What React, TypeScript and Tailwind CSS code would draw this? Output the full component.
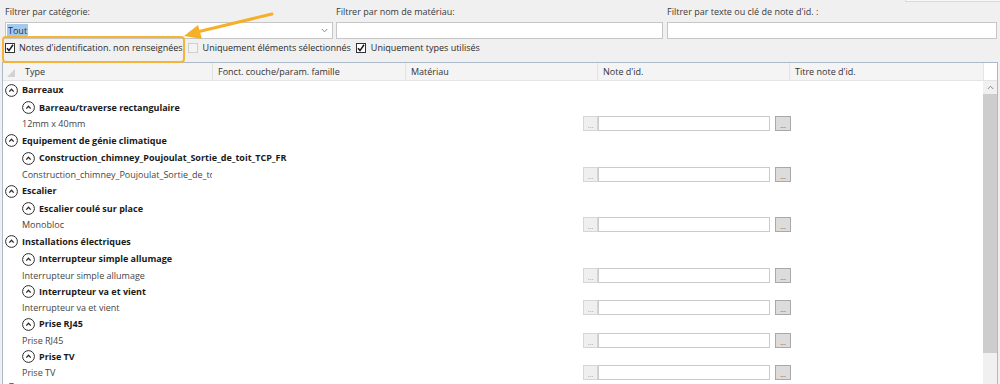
import React from 'react';

type TypeNode = { name: string; items: string[] };
type Group = { name: string; types: TypeNode[] };

const groups: Group[] = [
  {
    name: 'Barreaux',
    types: [{ name: 'Barreau/traverse rectangulaire', items: ['12mm x 40mm'] }],
  },
  {
    name: 'Equipement de génie climatique',
    types: [
      {
        name: 'Construction_chimney_Poujoulat_Sortie_de_toit_TCP_FR',
        items: ['Construction_chimney_Poujoulat_Sortie_de_toit_TCP_FR'],
      },
    ],
  },
  {
    name: 'Escalier',
    types: [{ name: 'Escalier coulé sur place', items: ['Monobloc'] }],
  },
  {
    name: 'Installations électriques',
    types: [
      { name: 'Interrupteur simple allumage', items: ['Interrupteur simple allumage'] },
      { name: 'Interrupteur va et vient', items: ['Interrupteur va et vient'] },
      { name: 'Prise RJ45', items: ['Prise RJ45'] },
      { name: 'Prise TV', items: ['Prise TV'] },
    ],
  },
  // next group, only its icon peeks in at the bottom edge
  { name: '', types: [] },
];

const CollapseIcon = () => (
  <svg width="13" height="13" viewBox="0 0 13 13" className="shrink-0">
    <circle cx="6.5" cy="6.5" r="5.9" fill="#fff" stroke="#2b2b2b" strokeWidth="1" />
    <path d="M4.3 7.6 L6.5 5.3 L8.7 7.6" fill="none" stroke="#2b2b2b" strokeWidth="1.3" />
  </svg>
);

const CheckBox = ({ checked, disabled }: { checked?: boolean; disabled?: boolean }) => (
  <span
    className={`flex h-[10px] w-[10px] items-center justify-center border ${
      disabled ? 'border-[#cfcfcf] bg-[#f3f3f3]' : 'border-[#333] bg-white'
    }`}
  >
    {checked && (
      <svg width="8" height="8" viewBox="0 0 8 8">
        <path d="M1 4.2 L3 6.6 L7 0.8" fill="none" stroke="#1a1a1a" strokeWidth="1.5" />
      </svg>
    )}
  </span>
);

const Dots = ({ dark }: { dark?: boolean }) => (
  <span className={`mt-[5px] text-[7px] leading-none ${dark ? 'text-[#555]' : 'text-[#999]'}`}>...</span>
);

const NoteInputs = () => (
  <div className="flex items-center">
    <span className="flex h-[15px] w-[15px] justify-center border border-[#d6d6d6] bg-[#efefef]">
      <Dots />
    </span>
    <span className="h-[15px] w-[172px] border border-[#cacaca] bg-white" />
    <span className="ml-[5px] flex h-[15px] w-[16px] justify-center border border-[#a9a9a9] bg-[#dcdcdc]">
      <Dots dark />
    </span>
  </div>
);

const headerCols = [
  { label: 'Type', w: 'w-[192px]' },
  { label: 'Fonct. couche/param. famille', w: 'w-[193px]' },
  { label: 'Matériau', w: 'w-[192px]' },
  { label: "Note d'id.", w: 'w-[192px]' },
  { label: "Titre note d'id.", w: 'w-[194px]' },
];

export default function App() {
  return (
    <div className="relative h-[384px] w-[1000px] overflow-hidden bg-[#f0f0f0] font-['Open_Sans','Segoe_UI',sans-serif] text-[9px] text-[#262626]">
      {/* top-right strip */}
      <div className="flex h-[2px] justify-end">
        <div className="w-[95px] border-b border-l border-[#d9d9d9] bg-[#f8f8f8]" />
      </div>

      {/* filters */}
      <div className="mt-[4px] flex pl-[5px]">
        <div className="w-[328px]">
          <div className="h-[12px] leading-[12px] text-[#3a3a3a]">Filtrer par catégorie:</div>
          <div className="mt-[4px] flex h-[17px] items-center justify-between border border-[#c6c6c6] bg-white pl-[1px] pr-[4px]">
            <span className="bg-[#a3c9ef] px-[1px] leading-[13px] text-[#1c3553]">Tout</span>
            <svg width="7" height="5" viewBox="0 0 7 5">
              <path d="M0.8 1 L3.5 3.8 L6.2 1" fill="none" stroke="#8a8a8a" strokeWidth="1" />
            </svg>
          </div>
        </div>
        <div className="ml-[3px] w-[327px]">
          <div className="h-[12px] leading-[12px] text-[#3a3a3a]">Filtrer par nom de matériau:</div>
          <div className="mt-[4px] h-[17px] border border-[#c6c6c6] bg-white" />
        </div>
        <div className="ml-[4px] w-[330px]">
          <div className="h-[12px] leading-[12px] text-[#3a3a3a]">Filtrer par texte ou clé de note d'id. :</div>
          <div className="mt-[4px] h-[17px] border border-[#c6c6c6] bg-white" />
        </div>
      </div>

      {/* checkboxes */}
      <div className="flex h-[17px] items-center pl-[5px] pt-[1px] text-[#2a2a2a]">
        <CheckBox checked />
        <span className="ml-[4px]">Notes d'identification. non renseignées</span>
        <span className="ml-[5px]">
          <CheckBox disabled />
        </span>
        <span className="ml-[5px]">Uniquement éléments sélectionnés</span>
        <span className="ml-[5px]">
          <CheckBox checked />
        </span>
        <span className="ml-[5px]">Uniquement types utilisés</span>
      </div>

      {/* callout */}
      <div className="absolute left-[2px] top-[36px] h-[27px] w-[183px] rounded-[4px] border-2 border-[#f4b43a]" />
      <svg className="absolute left-0 top-0" width="300" height="60" viewBox="0 0 300 60">
        <line x1="272" y1="14" x2="197" y2="32" stroke="#f5b028" strokeWidth="3" strokeLinecap="round" />
        <polygon points="184,36 198,25 202,39" fill="#f5b028" />
      </svg>

      {/* table */}
      <div className="ml-[2px] mt-[6px] w-[996px] border border-[#abb9c9] bg-white">
        <div className="flex h-[18px] border-b border-[#e4e4e4]">
          <div className="flex w-[980px] bg-[#f4f4f4]">
            <div className="relative w-[17px]">
              <svg className="absolute left-[4px] top-[6px]" width="8" height="8" viewBox="0 0 8 8">
                <polygon points="8,0 8,8 0,8" fill="#d2d2d2" />
              </svg>
            </div>
            {headerCols.map((c, i) => (
              <div
                key={c.label}
                className={`${c.w} flex items-center pl-[5px] text-[#333] ${i > 0 ? 'border-l border-[#e2e2e2]' : ''}`}
              >
                {c.label}
              </div>
            ))}
          </div>
          <div className="w-[14px] border-l border-[#e6e6e6] bg-white" />
        </div>

        <div className="flex h-[320px]">
          <div className="w-[980px]">
            {groups.map((g, gi) => (
              <React.Fragment key={gi}>
                <div className="flex h-[18px] items-center gap-[4px] pl-[2px] font-bold text-[#1a1a1a]">
                  <CollapseIcon />
                  {g.name && <span>{g.name}</span>}
                </div>
                {g.types.map((t) => (
                  <React.Fragment key={t.name}>
                    <div className="flex h-[17px] items-center gap-[4px] pl-[19px] font-bold text-[#1a1a1a]">
                      <CollapseIcon />
                      <span className="whitespace-nowrap">{t.name}</span>
                    </div>
                    {t.items.map((it) => (
                      <div key={it} className="flex h-[15.5px] items-center">
                        <div className="w-[209px] overflow-hidden whitespace-nowrap pl-[19px] text-[#444]">{it}</div>
                        <div className="ml-[371px]">
                          <NoteInputs />
                        </div>
                      </div>
                    ))}
                  </React.Fragment>
                ))}
              </React.Fragment>
            ))}
          </div>

          {/* scrollbar */}
          <div className="flex w-[14px] flex-col bg-[#f0f0f0]">
            <div className="flex h-[13px] items-center justify-center">
              <svg width="7" height="5" viewBox="0 0 7 5">
                <path d="M0.8 4 L3.5 1.2 L6.2 4" fill="none" stroke="#8a8a8a" strokeWidth="1" />
              </svg>
            </div>
            <div className="h-[259px] bg-[#cdcdcd]" />
          </div>
        </div>
      </div>
    </div>
  );
}
